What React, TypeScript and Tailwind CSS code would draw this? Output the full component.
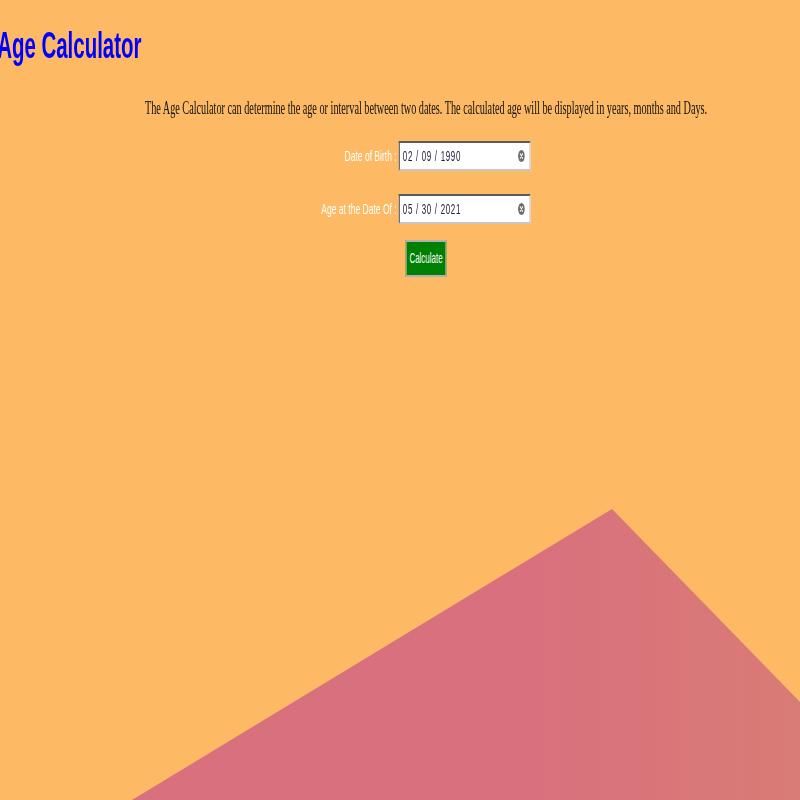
import React from "react";

const fields = [
  { label: "Date of Birth :", value: "02 / 09 / 1990" },
  { label: "Age at the Date Of :", value: "05 / 30 / 2021" },
];

function ClearIcon() {
  return (
    <svg width="12" height="12" viewBox="0 0 12 12">
      <circle cx="6" cy="6" r="6" fill="#6e6e6e" />
      <path d="M3.8 3.8 L8.2 8.2 M8.2 3.8 L3.8 8.2" stroke="#fff" strokeWidth="1.4" strokeLinecap="round" />
    </svg>
  );
}

export default function App() {
  return (
    <div className="relative min-h-[800px] w-full overflow-hidden bg-[#fdb964]">
      {/* background shape */}
      <svg
        className="absolute inset-0 h-full w-full"
        viewBox="0 0 800 800"
        preserveAspectRatio="none"
      >
        <defs>
          <linearGradient id="pink" x1="0" y1="0" x2="1" y2="0">
            <stop offset="0" stopColor="#d8707e" />
            <stop offset="0.6" stopColor="#d8717d" />
            <stop offset="1" stopColor="#d97b76" />
          </linearGradient>
        </defs>
        <polygon points="132,800 612,509 800,702 800,800" fill="url(#pink)" />
      </svg>

      {/* page content, squeezed horizontally like the screenshot */}
      <div className="relative w-[1408px] origin-top-left scale-x-[0.568]">
        <h1 className="-ml-[5px] mt-[25px] text-[36px] font-bold leading-[41px] text-[#0000ff] [font-family:'Liberation_Sans',Arial,sans-serif]">
          Age Calculator
        </h1>

        <div className="flex flex-col items-center pl-[92px]">
          <p className="mt-[32px] text-[18px] leading-[21px] text-[#111] [font-family:'Liberation_Serif','Times_New_Roman',serif]">
            The Age Calculator can determine the age or interval between two dates. The calculated age will be displayed in years, months and Days.
          </p>

          <div className="mt-[22px] grid grid-cols-[auto_auto] items-center gap-x-[4px] gap-y-[23px] [font-family:'Liberation_Sans',Arial,sans-serif]">
            {fields.map((f) => (
              <React.Fragment key={f.label}>
                <label className="text-right text-[15px] text-white">{f.label}</label>
                <div className="flex h-[30px] w-[232px] items-center justify-between border-2 border-t-[#5a5a5a] border-l-[#5a5a5a] border-r-[#c8c8c8] border-b-[#c8c8c8] bg-white pl-[5px] pr-[8px]">
                  <span className="text-[14px] tracking-[1.2px] text-[#202040]">{f.value}</span>
                  <ClearIcon />
                </div>
              </React.Fragment>
            ))}
          </div>

          <button className="mt-[16px] h-[37px] w-[72px] border-2 border-[#b0b0b0] bg-[#008000] text-[14px] text-white [font-family:'Liberation_Sans',Arial,sans-serif]">
            Calculate
          </button>
        </div>
      </div>
    </div>
  );
}
